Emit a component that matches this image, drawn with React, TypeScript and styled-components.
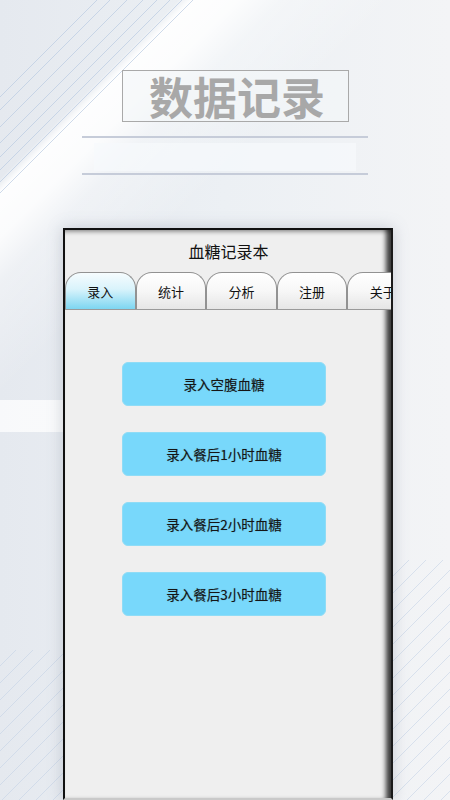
import React from "react";
import styled, { createGlobalStyle } from "styled-components";

const GlobalStyle = createGlobalStyle`
  html, body { margin: 0; padding: 0; }
  body { width: 450px; height: 800px; overflow: hidden; font-family: "Noto Sans CJK SC", "Noto Sans", sans-serif; }
`;

const lineCs = [97, 110, 127, 143, 157, 170, 182, 193];
const lineStops = lineCs
  .map((c) => {
    const d = c / Math.SQRT2;
    return `transparent ${(d - 0.6).toFixed(1)}px, rgba(186,203,226,0.7) ${(d - 0.6).toFixed(1)}px, rgba(186,203,226,0.7) ${(d + 0.6).toFixed(1)}px, transparent ${(d + 0.6).toFixed(1)}px`;
  })
  .join(", ");

const Page = styled.div`
  width: 450px;
  height: 800px;
  overflow: hidden;
  display: flex;
  flex-direction: column;
  align-items: flex-start;
  padding-top: 70px;
  box-sizing: border-box;
  background-color: #eceff3;
  background-image:
    linear-gradient(135deg, transparent 0px, ${lineStops}, transparent 300px),
    linear-gradient(135deg, rgba(255,255,255,0) 126px, rgba(255,255,255,0.95) 136px, rgba(255,255,255,0.85) 168px, rgba(255,255,255,0.35) 200px, rgba(255,255,255,0) 280px),
    linear-gradient(to bottom, transparent 400px, rgba(255,255,255,0.75) 400px, rgba(255,255,255,0.75) 432px, transparent 432px),
    repeating-linear-gradient(135deg, transparent 0px, transparent 11px, rgba(190,206,228,0.5) 11px, rgba(190,206,228,0.5) 12px),
    repeating-linear-gradient(135deg, transparent 0px, transparent 11px, rgba(190,206,228,0.5) 11px, rgba(190,206,228,0.5) 12px),
    linear-gradient(to right, #e5e9ef 0%, #ecf0f4 50%, #f3f4f6 100%);
  background-size: 450px 450px, 450px 450px, 63px 800px, 63px 150px, 57px 240px, 450px 800px;
  background-position: 0 0, 0 0, 0 0, 0 650px, 393px 560px, 0 0;
  background-repeat: no-repeat;
`;

const TitleBox = styled.div`
  margin-left: 122px;
  width: 227px;
  height: 52px;
  box-sizing: border-box;
  border: 1px solid #a9a9a9;
  background: rgba(244, 246, 249, 0.6);
  display: flex;
  align-items: center;
  justify-content: center;
  padding-left: 3px;
  font-size: 44px;
  font-weight: 700;
  color: #a8a8a8;
  line-height: 1;
`;

const DividerBlock = styled.div`
  margin-left: 82px;
  margin-top: 14px;
  width: 286px;
  display: flex;
  flex-direction: column;
  align-items: center;
`;

const Rule = styled.div`
  width: 100%;
  height: 2px;
  background: #c6ccd9;
`;

const SubPanel = styled.div`
  width: 262px;
  height: 28px;
  margin: 5px 0 2px;
  background: rgba(247, 249, 252, 0.7);
`;

const Phone = styled.div`
  margin-left: 63px;
  margin-top: 53px;
  width: 330px;
  height: 572px;
  box-sizing: border-box;
  border-top: 2px solid #111;
  border-left: 2px solid #111;
  border-right: 2px solid #1a1a1a;
  border-bottom: 2px solid #c9c9c9;
  background: #efefef;
  box-shadow:
    inset -8px 0 5px -3px rgba(0, 0, 0, 0.75),
    inset 0 5px 4px -3px rgba(0, 0, 0, 0.35),
    0 0 14px rgba(120, 130, 150, 0.35);
  display: flex;
  flex-direction: column;
  overflow: hidden;
`;

const AppTitle = styled.div`
  height: 42px;
  display: flex;
  align-items: center;
  justify-content: center;
  font-size: 16px;
  color: #111;
  padding-left: 1px;
`;

const TabBar = styled.div`
  display: flex;
  height: 37px;
  border-bottom: 1px solid #9a9a9a;
  overflow: hidden;
  flex-shrink: 0;
`;

const Tab = styled.div<{ $active?: boolean }>`
  flex: 0 0 70.6px;
  height: 37px;
  box-sizing: border-box;
  border: 1.5px solid #929292;
  border-bottom: none;
  border-radius: 16px 16px 0 0;
  background: ${(p) =>
    p.$active
      ? "linear-gradient(to bottom, #f6fcfe 0%, #d9f3fb 45%, #7dd6f1 100%)"
      : "linear-gradient(to bottom, #ffffff 0%, #f7f7f7 50%, #e6e6e6 100%)"};
  display: flex;
  align-items: center;
  justify-content: center;
  font-size: 13px;
  color: #111;
  padding-top: 1px;
`;

const Content = styled.div`
  flex: 1;
  display: flex;
  flex-direction: column;
  align-items: flex-start;
  gap: 26px;
  padding-top: 52px;
  padding-left: 57px;
`;

const EntryButton = styled.button`
  width: 204px;
  height: 44px;
  border: 1px solid #8fdcf6;
  border-radius: 6px;
  background: #78d8fb;
  color: #151515;
  font-family: "Noto Sans CJK SC", "Noto Sans", sans-serif;
  font-size: 13.5px;
  font-weight: 400;
  display: flex;
  align-items: center;
  justify-content: center;
  padding: 0;
  cursor: pointer;
  text-shadow: 0 0 1px rgba(0, 0, 0, 0.35);
`;

const tabs = ["录入", "统计", "分析", "注册", "关于"];
const entries = ["录入空腹血糖", "录入餐后1小时血糖", "录入餐后2小时血糖", "录入餐后3小时血糖"];

export default function App() {
  return (
    <>
      <GlobalStyle />
      <Page>
        <TitleBox>数据记录</TitleBox>
        <DividerBlock>
          <Rule />
          <SubPanel />
          <Rule />
        </DividerBlock>
        <Phone>
          <AppTitle>血糖记录本</AppTitle>
          <TabBar>
            {tabs.map((t, i) => (
              <Tab key={t} $active={i === 0}>
                {t}
              </Tab>
            ))}
          </TabBar>
          <Content>
            {entries.map((e) => (
              <EntryButton key={e}>{e}</EntryButton>
            ))}
          </Content>
        </Phone>
      </Page>
    </>
  );
}
